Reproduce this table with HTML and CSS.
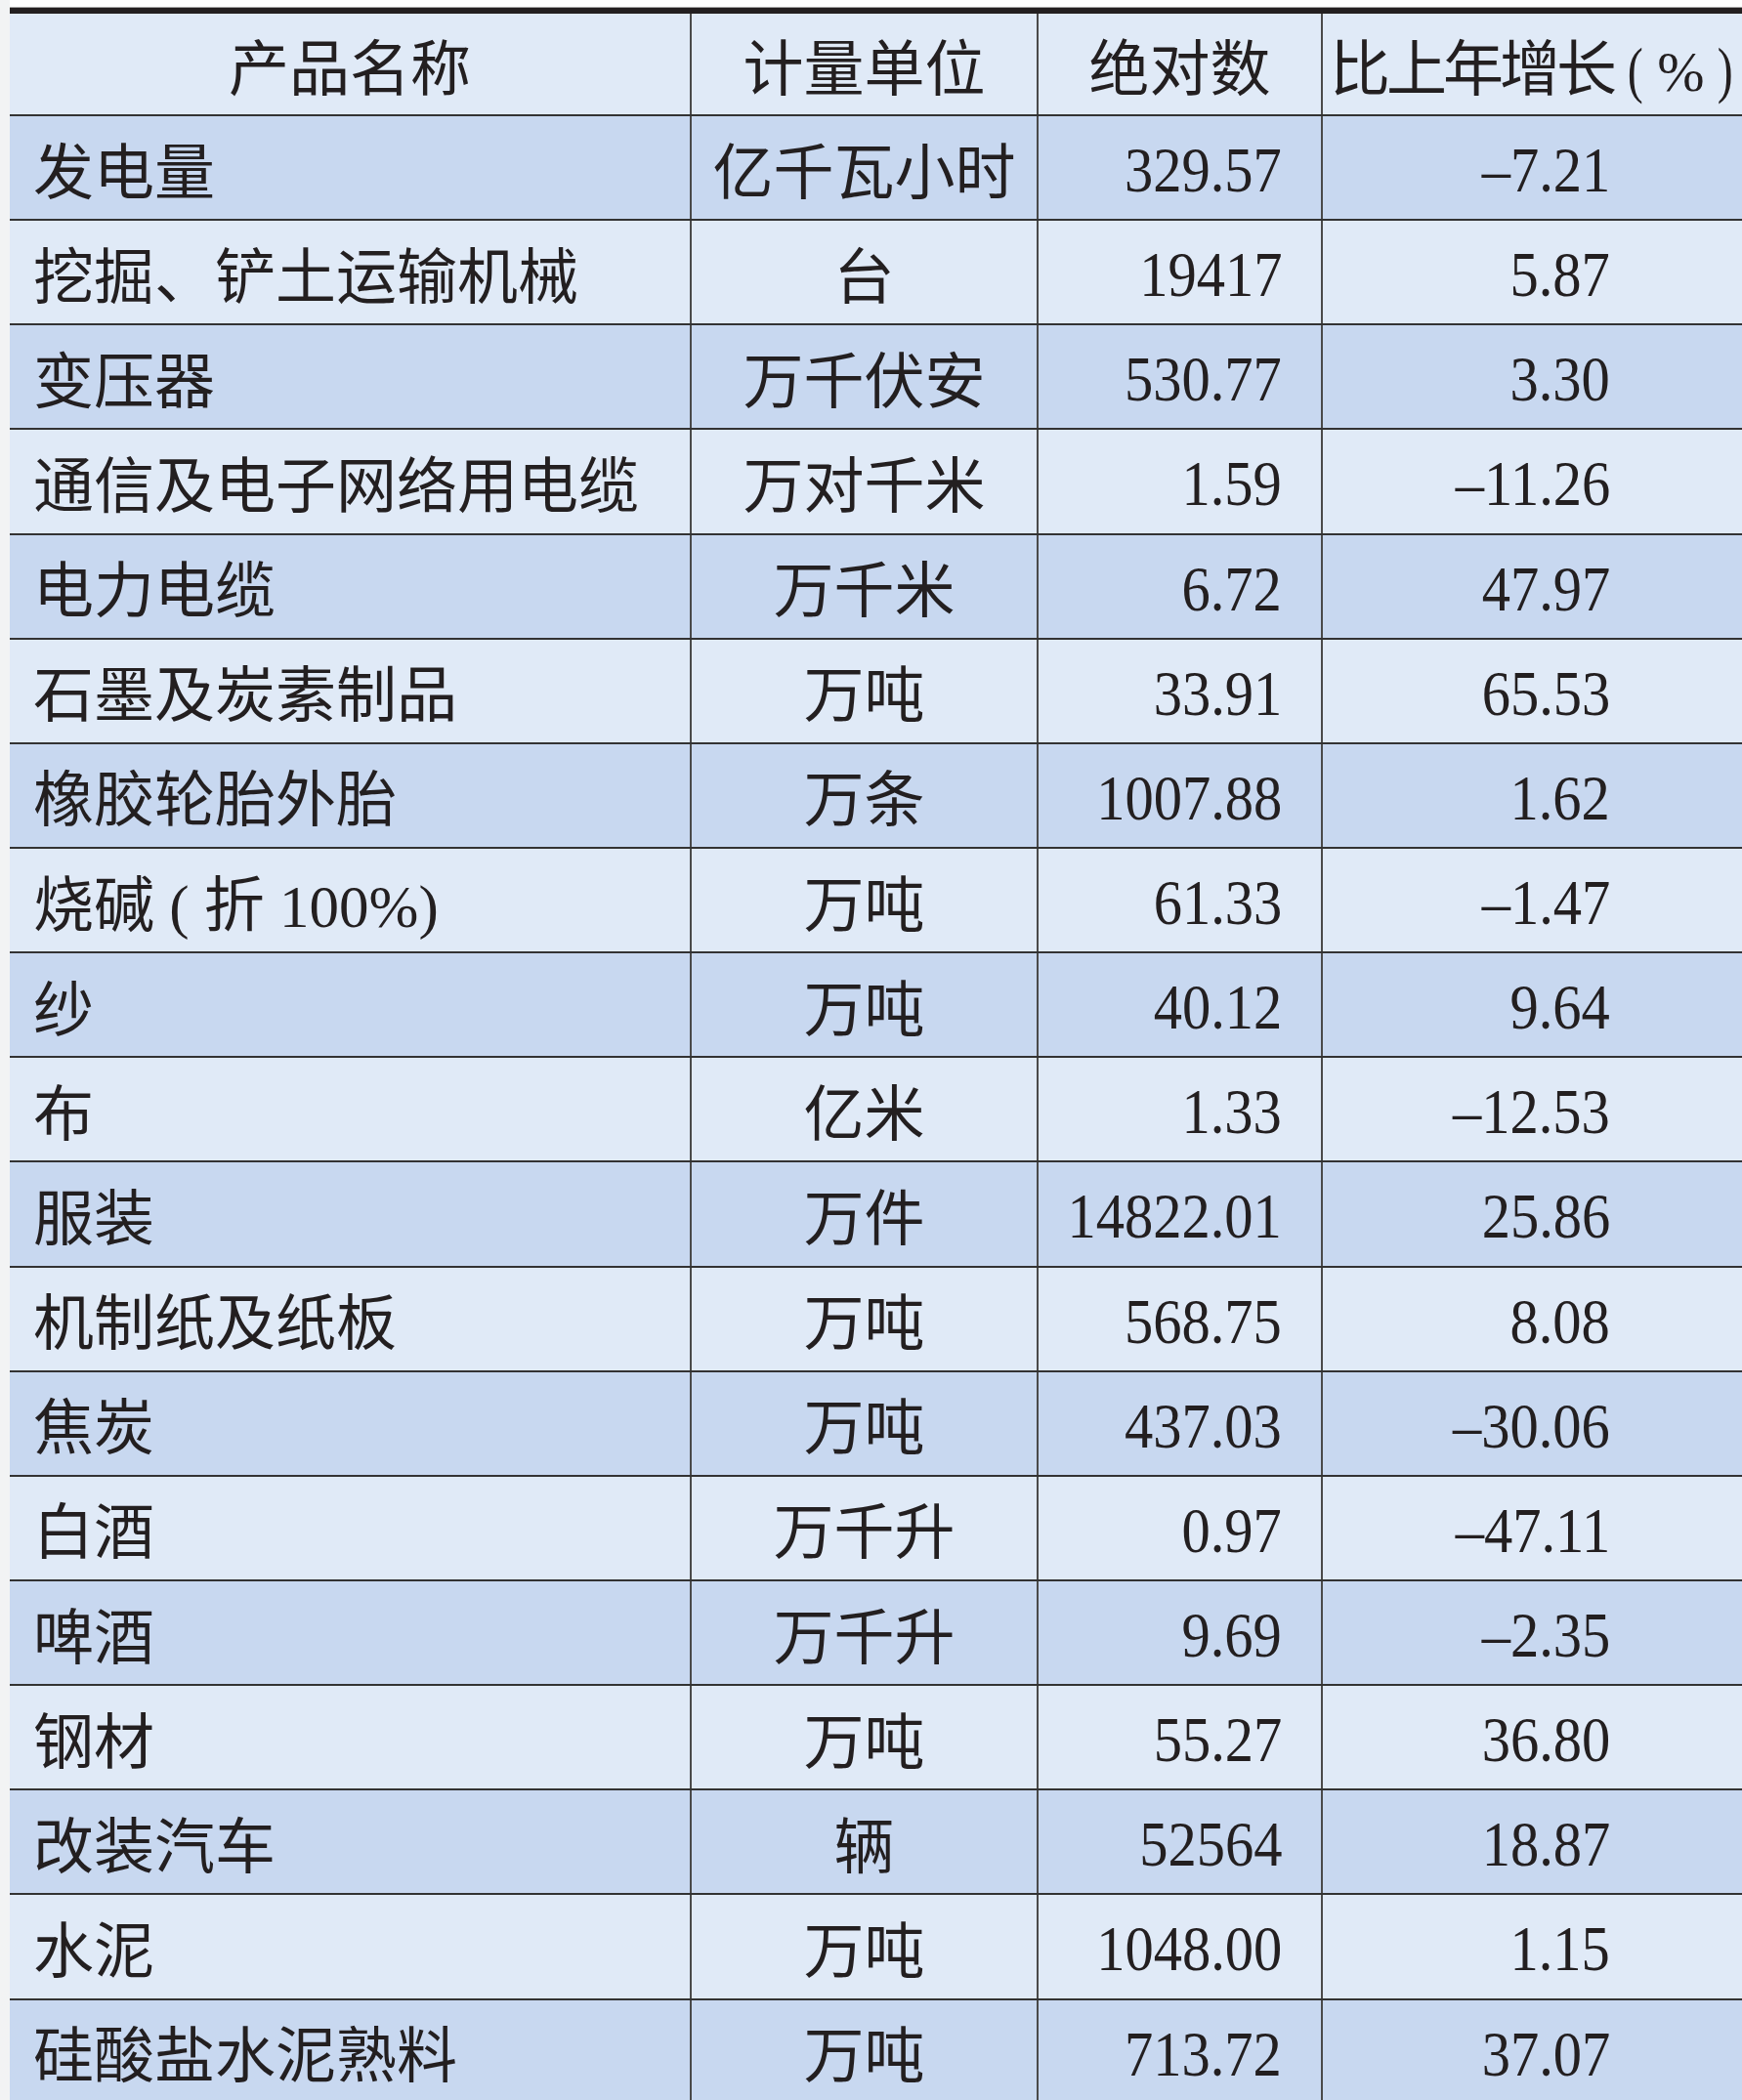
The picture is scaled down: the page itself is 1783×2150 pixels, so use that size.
FILE: index.html
```html
<!DOCTYPE html>
<html lang="zh-CN">
<head>
<meta charset="utf-8">
<title>主要工业产品产量</title>
<link rel="stylesheet" href="styles.css">
</head>
<body>
<div class="page">
  <div class="table">
    <div class="row head light">
      <div class="cell">产品名称</div>
      <div class="cell">计量单位</div>
      <div class="cell">绝对数</div>
      <div class="cell chg"><span class="txt">比上年增长<span class="hl"><span class="par">(</span><span class="pct">%</span><span class="par">)</span></span></span></div>
    </div>
    <div class="row dark">
      <div class="cell name">发电量</div>
      <div class="cell unit">亿千瓦小时</div>
      <div class="cell abs"><span class="num">329.57</span></div>
      <div class="cell chg"><span class="num">–7.21</span></div>
    </div>
    <div class="row light">
      <div class="cell name">挖掘、铲土运输机械</div>
      <div class="cell unit">台</div>
      <div class="cell abs"><span class="num">19417</span></div>
      <div class="cell chg"><span class="num">5.87</span></div>
    </div>
    <div class="row dark">
      <div class="cell name">变压器</div>
      <div class="cell unit">万千伏安</div>
      <div class="cell abs"><span class="num">530.77</span></div>
      <div class="cell chg"><span class="num">3.30</span></div>
    </div>
    <div class="row light">
      <div class="cell name">通信及电子网络用电缆</div>
      <div class="cell unit">万对千米</div>
      <div class="cell abs"><span class="num">1.59</span></div>
      <div class="cell chg"><span class="num">–11.26</span></div>
    </div>
    <div class="row dark">
      <div class="cell name">电力电缆</div>
      <div class="cell unit">万千米</div>
      <div class="cell abs"><span class="num">6.72</span></div>
      <div class="cell chg"><span class="num">47.97</span></div>
    </div>
    <div class="row light">
      <div class="cell name">石墨及炭素制品</div>
      <div class="cell unit">万吨</div>
      <div class="cell abs"><span class="num">33.91</span></div>
      <div class="cell chg"><span class="num">65.53</span></div>
    </div>
    <div class="row dark">
      <div class="cell name">橡胶轮胎外胎</div>
      <div class="cell unit">万条</div>
      <div class="cell abs"><span class="num">1007.88</span></div>
      <div class="cell chg"><span class="num">1.62</span></div>
    </div>
    <div class="row light">
      <div class="cell name"><span class="txt">烧碱<span class="lat"> ( </span>折<span class="lat"> 100%)</span></span></div>
      <div class="cell unit">万吨</div>
      <div class="cell abs"><span class="num">61.33</span></div>
      <div class="cell chg"><span class="num">–1.47</span></div>
    </div>
    <div class="row dark">
      <div class="cell name">纱</div>
      <div class="cell unit">万吨</div>
      <div class="cell abs"><span class="num">40.12</span></div>
      <div class="cell chg"><span class="num">9.64</span></div>
    </div>
    <div class="row light">
      <div class="cell name">布</div>
      <div class="cell unit">亿米</div>
      <div class="cell abs"><span class="num">1.33</span></div>
      <div class="cell chg"><span class="num">–12.53</span></div>
    </div>
    <div class="row dark">
      <div class="cell name">服装</div>
      <div class="cell unit">万件</div>
      <div class="cell abs"><span class="num">14822.01</span></div>
      <div class="cell chg"><span class="num">25.86</span></div>
    </div>
    <div class="row light">
      <div class="cell name">机制纸及纸板</div>
      <div class="cell unit">万吨</div>
      <div class="cell abs"><span class="num">568.75</span></div>
      <div class="cell chg"><span class="num">8.08</span></div>
    </div>
    <div class="row dark">
      <div class="cell name">焦炭</div>
      <div class="cell unit">万吨</div>
      <div class="cell abs"><span class="num">437.03</span></div>
      <div class="cell chg"><span class="num">–30.06</span></div>
    </div>
    <div class="row light">
      <div class="cell name">白酒</div>
      <div class="cell unit">万千升</div>
      <div class="cell abs"><span class="num">0.97</span></div>
      <div class="cell chg"><span class="num">–47.11</span></div>
    </div>
    <div class="row dark">
      <div class="cell name">啤酒</div>
      <div class="cell unit">万千升</div>
      <div class="cell abs"><span class="num">9.69</span></div>
      <div class="cell chg"><span class="num">–2.35</span></div>
    </div>
    <div class="row light">
      <div class="cell name">钢材</div>
      <div class="cell unit">万吨</div>
      <div class="cell abs"><span class="num">55.27</span></div>
      <div class="cell chg"><span class="num">36.80</span></div>
    </div>
    <div class="row dark">
      <div class="cell name">改装汽车</div>
      <div class="cell unit">辆</div>
      <div class="cell abs"><span class="num">52564</span></div>
      <div class="cell chg"><span class="num">18.87</span></div>
    </div>
    <div class="row light">
      <div class="cell name">水泥</div>
      <div class="cell unit">万吨</div>
      <div class="cell abs"><span class="num">1048.00</span></div>
      <div class="cell chg"><span class="num">1.15</span></div>
    </div>
    <div class="row dark">
      <div class="cell name">硅酸盐水泥熟料</div>
      <div class="cell unit">万吨</div>
      <div class="cell abs"><span class="num">713.72</span></div>
      <div class="cell chg"><span class="num">37.07</span></div>
    </div>
  </div>
</div>
</body>
</html>
```

FILE: styles.css
```css
*, *::before, *::after {
  box-sizing: border-box;
}

html, body {
  margin: 0;
  padding: 0;
  overflow: hidden;
}

body {
  background: linear-gradient(to right, #f2f3f4 10px, #ffffff 10px);
  font-family: "Noto Sans CJK SC", "Noto Sans CJK TC", sans-serif;
  color: #231f20;
}

.page {
  padding: 8px 0 0 10px;
}

.table {
  display: flex;
  flex-direction: column;
  border-top: 6px solid #231f20;
  box-shadow: 0 -1px 0 #a3a3a3;
}

.row {
  display: grid;
  grid-template-columns: 698px 355px 291px 1fr;
  height: 107.15px;
  border-bottom: 2px solid #333333;
}

.row.head {
  height: 105px;
}

.light {
  background: #e0eaf7;
}

.dark {
  background: #c8d8f0;
}

.cell {
  display: flex;
  align-items: center;
  border-right: 2px solid #4a4a4a;
  font-size: 62px;
  white-space: nowrap;
  overflow: hidden;
}

.cell:last-child {
  border-right: 0;
}

.head .cell {
  justify-content: center;
}

.head .chg {
  justify-content: flex-start;
  padding-left: 7px;
  padding-right: 0;
  letter-spacing: -4px;
}

.hl {
  font-family: "Liberation Serif", serif;
  font-size: 64px;
  letter-spacing: 0;
}

.par {
  display: inline-block;
  transform: scaleX(0.75);
}

.hl .par:first-child {
  margin-left: 12px;
}

.pct {
  display: inline-block;
  margin: 0 10px 0 12px;
  font-size: 58px;
}

.name {
  padding-left: 24px;
}

.unit {
  justify-content: center;
}

.abs {
  justify-content: flex-end;
  padding-right: 40px;
}

.chg {
  justify-content: flex-end;
  padding-right: 135px;
}

.num {
  display: inline-block;
  margin-top: 6px;
  font-family: "Liberation Serif", serif;
  font-size: 65px;
  transform: scaleX(0.9);
  transform-origin: right center;
}

.lat {
  font-family: "Liberation Serif", serif;
  font-size: 61px;
}
```
